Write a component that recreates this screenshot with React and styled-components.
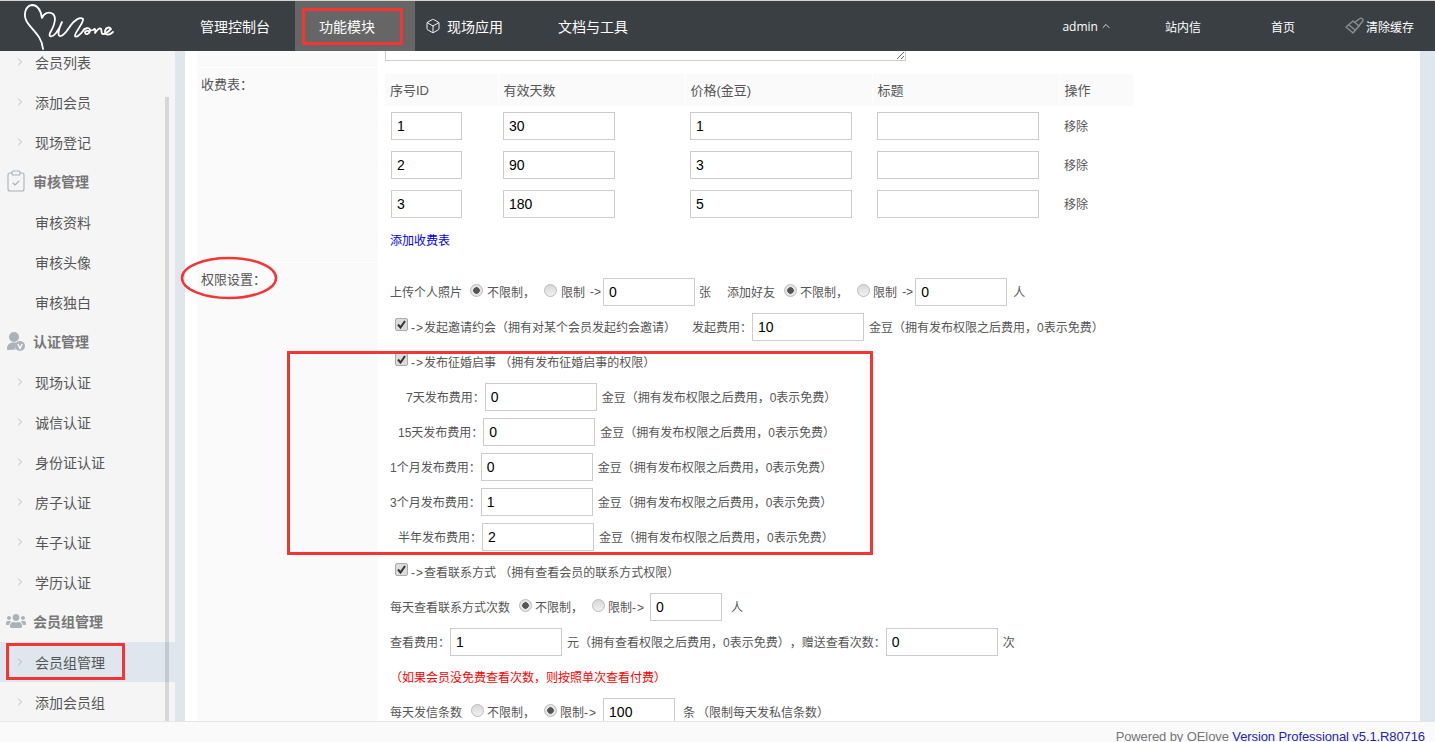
import React from "react";
import styled, { createGlobalStyle } from "styled-components";
import { Box, ChevronRight, ClipboardCheck, ChevronUp } from "lucide-react";
import { FaUsers } from "react-icons/fa";

const GlobalStyle = createGlobalStyle`
  html, body {
    margin: 0;
    padding: 0;
    height: 100%;
    overflow: hidden;
  }
  body {
    font-family: "Liberation Sans", "Noto Sans CJK SC", sans-serif;
    font-size: 12px;
    color: #555;
    text-spacing-trim: space-all;
  }
  * {
    box-sizing: border-box;
  }
`;

const Page = styled.div`
  position: relative;
  width: 1435px;
  height: 742px;
  display: flex;
  flex-direction: column;
  overflow: hidden;
  background: #fff;
`;

const Header = styled.header`
  flex: none;
  height: 51px;
  display: flex;
  align-items: stretch;
  background: #3a3f44;
  border-top: 1px solid #d4d4d4;
  color: #fff;
  font-size: 14px;
`;

const LogoWrap = styled.div`
  flex: none;
  width: 175px;
  padding-left: 20px;
  svg {
    display: block;
    margin-top: -1px;
  }
`;

const NavItem = styled.a`
  flex: none;
  display: flex;
  align-items: center;
  gap: ${(p) => p.$gap || 0}px;
  padding: 0 ${(p) => p.$pr}px 0 ${(p) => p.$pl}px;
  background: ${(p) => (p.$active ? "#666" : "transparent")};
  color: #fff;
`;

const NavRight = styled.div`
  margin-left: auto;
  display: flex;
  align-items: stretch;
  font-size: 12px;
`;

const AdminName = styled.span`
  font-family: "Open Sans", sans-serif;
  font-size: 12px;
  font-weight: 400;
`;

const Body = styled.div`
  flex: 1;
  min-height: 0;
  display: flex;
  background: #dfe6ee;
`;

const Sidebar = styled.aside`
  position: relative;
  flex: none;
  width: 175px;
  background: #f5f5f5;
  overflow: hidden;
`;

const SideList = styled.div`
  margin-top: -9px;
`;

const SideHead = styled.div`
  height: 40px;
  display: flex;
  align-items: center;
  padding: 0 0 2px 8px;
  gap: 9px;
  font-size: 14px;
  font-weight: 700;
  color: #777;
`;

const IconSlot = styled.span`
  flex: none;
  width: 16px;
  display: flex;
  justify-content: center;
  color: #aab2ba;
  svg {
    flex: none;
  }
`;

const SideItem = styled.div`
  height: 40px;
  display: flex;
  align-items: center;
  padding-left: ${(p) => (p.$plain ? 35 : 14)}px;
  gap: 9px;
  font-size: 14px;
  color: #555;
  background: ${(p) => (p.$active ? "#dfe6ee" : "transparent")};
  svg {
    flex: none;
    color: #999;
  }
`;

const ScrollThumb = styled.div`
  position: absolute;
  top: 46px;
  bottom: 0;
  left: 165px;
  width: 4px;
  background: rgba(0, 0, 0, 0.12);
`;

const Main = styled.main`
  flex: 1;
  min-width: 0;
  margin: 0 15px 0 10px;
  padding-left: 12px;
  background: #fff;
  overflow: hidden;
`;

const FormRow = styled.section`
  display: grid;
  grid-template-columns: 181px 1fr;
  height: ${(p) => p.$h}px;
  margin-bottom: 1px;
  overflow: hidden;
`;

const Label = styled.div`
  background: #fafafa;
  padding: 7px 0 0 4px;
  font-size: 13px;
  line-height: 20px;
  color: #555;
`;

const Content = styled.div`
  padding-left: 7px;
  min-width: 0;
`;

const Notes = styled.textarea`
  display: block;
  width: 521px;
  height: 70px;
  margin-top: -60px;
  border: 1px solid #ccc;
  background: #fff;
`;

const FeeTable = styled.table`
  width: 748px;
  margin-top: 6px;
  border-collapse: collapse;
  table-layout: fixed;
  th {
    height: 32px;
    padding: 0 5px 2px;
    background: #fafafa;
    border-right: 1px solid #fff;
    font-size: 13px;
    font-weight: 400;
    text-align: left;
    color: #555;
  }
  th:last-child {
    border-right: 0;
  }
  td {
    height: 39px;
    padding: 0 5px;
    vertical-align: middle;
    font-size: 12px;
    color: #555;
  }
`;

const Field = styled.input`
  display: block;
  flex: none;
  width: ${(p) => p.$w}px;
  height: 28px;
  margin-left: ${(p) => p.$ml || 0}px;
  padding: 0 5px;
  border: 1px solid #ccc;
  background: #fff;
  font-family: "Liberation Sans", sans-serif;
  font-size: 14px;
  color: #000;
  outline: none;
`;

const AddLink = styled.a`
  display: block;
  height: 36px;
  padding-left: 5px;
  line-height: 36px;
  font-size: 12px;
  color: #00e;
`;

const PermList = styled.div`
  padding: 11px 0 0 5px;
`;

const Line = styled.div`
  height: 35px;
  display: flex;
  align-items: center;
  white-space: nowrap;
  color: ${(p) => (p.$red ? "#f00" : "#555")};
`;

const Txt = styled.span`
  flex: none;
  margin-left: ${(p) => p.$ml || 0}px;
  font-size: 12px;
`;

const Arrow = styled.span`
  letter-spacing: 1px;
`;

const Radio = styled.input.attrs({ type: "radio", readOnly: true })`
  flex: none;
  appearance: none;
  width: 13px;
  height: 13px;
  margin: -2px 0 0 ${(p) => p.$ml || 0}px;
  border: 1px solid #bbb;
  border-radius: 50%;
  background: ${(p) =>
    p.checked
      ? "radial-gradient(circle, #555 0 3px, #e4e4e4 3.5px)"
      : "linear-gradient(#d8d8d8, #f0f0f0)"};
`;

const Check = styled.span`
  flex: none;
  display: flex;
  align-items: center;
  justify-content: center;
  width: 13px;
  height: 13px;
  margin: -4px 0 0 5px;
  border: 1px solid #aaa;
  border-radius: 2px;
  background: #dcdcdc;
  color: #333;
  svg {
    display: block;
  }
`;

const Footer = styled.footer`
  flex: none;
  height: 21px;
  padding: 6px 10px 0 0;
  border-top: 1px solid #e5e5e5;
  background: #fafafa;
  text-align: right;
  font-size: 13px;
  line-height: 18px;
  letter-spacing: -0.1px;
  color: #777;
  white-space: nowrap;
  a {
    color: #22b;
  }
`;

const RedBox = styled.div`
  position: absolute;
  left: ${(p) => p.$x}px;
  top: ${(p) => p.$y}px;
  width: ${(p) => p.$w}px;
  height: ${(p) => p.$h}px;
  border: 3px solid #f43535;
  pointer-events: none;
`;

const RedEllipse = styled.svg`
  position: absolute;
  left: 179px;
  top: 256px;
  pointer-events: none;
`;

const Logo = () => (
  <svg width="100" height="52" viewBox="0 0 100 52" fill="none" stroke="#fff" strokeWidth="1.8" strokeLinecap="round" strokeLinejoin="round">
    <path d="M23 49C22 36 12 30 7 22C3 15 5 6 12 5C18 5 21 12 22 18C24 13 29 11 33 14C37 18 34 26 30 33C28 38 33 37 36 33C39 29 41 25 42 22C38 30 37 37 41 36C45 35 48 29 51 25C54 21 60 16 63 19C64 23 54 33 55 36C56 38 60 35 63 31C64 28 70 27 70 30C70 34 65 36 65 32C66 30 70 31 73 30C75 28 76 29 75 33C77 30 80 27 81 29C82 31 81 34 83 34C86 34 89 31 91 29C89 26 85 28 85 32C85 36 90 35 93 32" />
  </svg>
);

const BrushIcon = () => (
  <svg width="20" height="20" viewBox="0 0 20 20" fill="none" stroke="#8b8f93" strokeWidth="1.4" strokeLinejoin="round">
    <path d="M1 11L8 5L14 10L8 17C6 15 3 13 1 11Z" />
    <path d="M10 6L15 2.500C16 1.600 18 2.600 18 4C18.300 5 17.500 5.500 17 6L13 11" />
    <path d="M4 9L10 14" />
  </svg>
);

const VerifyIcon = () => (
  <svg width="18" height="20" viewBox="0 0 18 20" fill="#aab2ba">
    <circle cx="7" cy="6" r="5" />
    <path d="M0 18C0 13 3 11.500 7 11.500C8 11.500 9 11.600 9.500 12C7.500 14 7.500 17 9 18.500L1 19C0.400 19 0 18.600 0 18Z" />
    <circle cx="13" cy="15" r="5" />
    <path d="M10.800 13L13 17.500L15.200 13" fill="none" stroke="#fff" strokeWidth="1.4" />
  </svg>
);

const CheckMark = () => (
  <svg width="9" height="9" viewBox="0 0 9 9" fill="none" stroke="currentColor" strokeWidth="2">
    <path d="M1 4.500L3.500 7.500L8 1" />
  </svg>
);

const feeRows = [
  ["1", "30", "1"],
  ["2", "90", "3"],
  ["3", "180", "5"],
];

const sideEntries = [
  { text: "会员列表" },
  { text: "添加会员" },
  { text: "现场登记" },
  { text: "审核管理", head: <ClipboardCheck size={24} strokeWidth={1.1} /> },
  { text: "审核资料", plain: true },
  { text: "审核头像", plain: true },
  { text: "审核独白", plain: true },
  { text: "认证管理", head: <VerifyIcon /> },
  { text: "现场认证" },
  { text: "诚信认证" },
  { text: "身份证认证" },
  { text: "房子认证" },
  { text: "车子认证" },
  { text: "学历认证" },
  { text: "会员组管理", head: <FaUsers size={20} /> },
  { text: "会员组管理", active: true },
  { text: "添加会员组" },
];

const costNote = "金豆（拥有发布权限之后费用，0表示免费）";

const priceLines = [
  { label: "7天发布费用：", ml: 16, value: "0" },
  { label: "15天发布费用：", ml: 8, value: "0" },
  { label: "1个月发布费用：", ml: 0, value: "0" },
  { label: "3个月发布费用：", ml: 0, value: "1" },
  { label: "半年发布费用：", ml: 8, value: "2" },
];

const App = () => (
  <Page>
    <GlobalStyle />
    <Header>
      <LogoWrap>
        <Logo />
      </LogoWrap>
      <NavItem $pl={25} $pr={25}>管理控制台</NavItem>
      <NavItem $pl={24} $pr={40} $active>功能模块</NavItem>
      <NavItem $pl={10} $pr={28} $gap={6}>
        <Box size={16} strokeWidth={1.4} />
        现场应用
      </NavItem>
      <NavItem $pl={27} $pr={0}>文档与工具</NavItem>
      <NavRight>
        <NavItem $pl={0} $pr={53} $gap={2}>
          <AdminName>admin</AdminName>
          <ChevronUp size={12} strokeWidth={1.6} />
        </NavItem>
        <NavItem $pl={0} $pr={70}>站内信</NavItem>
        <NavItem $pl={0} $pr={50}>首页</NavItem>
        <NavItem $pl={0} $pr={21} $gap={1}>
          <BrushIcon />
          清除缓存
        </NavItem>
      </NavRight>
    </Header>
    <Body>
      <Sidebar>
        <SideList>
          {sideEntries.map((entry, i) =>
            entry.head ? (
              <SideHead key={i}>
                <IconSlot>{entry.head}</IconSlot>
                {entry.text}
              </SideHead>
            ) : (
              <SideItem key={i} $plain={entry.plain} $active={entry.active}>
                {!entry.plain && <ChevronRight size={12} strokeWidth={1.3} />}
                {entry.text}
              </SideItem>
            )
          )}
        </SideList>
        <ScrollThumb />
      </Sidebar>
      <Main>
        <FormRow $h={16}>
          <Label />
          <Content>
            <Notes readOnly />
          </Content>
        </FormRow>
        <FormRow $h={194}>
          <Label>收费表：</Label>
          <Content>
            <FeeTable>
              <colgroup>
                <col width="113" />
                <col width="187" />
                <col width="187" />
                <col width="187" />
                <col width="74" />
              </colgroup>
              <thead>
                <tr>
                  <th>序号ID</th>
                  <th>有效天数</th>
                  <th>价格(金豆)</th>
                  <th>标题</th>
                  <th>操作</th>
                </tr>
              </thead>
              <tbody>
                {feeRows.map((row) => (
                  <tr key={row[0]}>
                    <td><Field $w={71} $ml={1} defaultValue={row[0]} /></td>
                    <td><Field $w={112} defaultValue={row[1]} /></td>
                    <td><Field $w={162} defaultValue={row[2]} /></td>
                    <td><Field $w={162} /></td>
                    <td>移除</td>
                  </tr>
                ))}
              </tbody>
            </FeeTable>
            <AddLink>添加收费表</AddLink>
          </Content>
        </FormRow>
        <FormRow $h={470}>
          <Label>权限设置：</Label>
          <Content>
            <PermList>
              <Line>
                <Txt>上传个人照片</Txt>
                <Radio $ml={8} checked />
                <Txt $ml={4}>不限制，</Txt>
                <Radio $ml={9} checked={false} />
                <Txt $ml={4}>限制</Txt>
                <Txt $ml={5}>-&gt;</Txt>
                <Field $w={92} $ml={2} defaultValue="0" />
                <Txt $ml={4}>张</Txt>
                <Txt $ml={16}>添加好友</Txt>
                <Radio $ml={9} checked />
                <Txt $ml={3}>不限制，</Txt>
                <Radio $ml={9} checked={false} />
                <Txt $ml={3}>限制</Txt>
                <Txt $ml={5}>-&gt;</Txt>
                <Field $w={92} $ml={2} defaultValue="0" />
                <Txt $ml={6}>人</Txt>
              </Line>
              <Line>
                <Check><CheckMark /></Check>
                <Txt $ml={3}><Arrow>-&gt;</Arrow>发起邀请约会（拥有对某个会员发起约会邀请）</Txt>
                <Txt $ml={16}>发起费用：</Txt>
                <Field $w={112} defaultValue="10" />
                <Txt $ml={5}>{costNote}</Txt>
              </Line>
              <Line>
                <Check><CheckMark /></Check>
                <Txt $ml={3}><Arrow>-&gt;</Arrow>发布征婚启事 （拥有发布征婚启事的权限）</Txt>
              </Line>
              {priceLines.map((line) => (
                <Line key={line.label}>
                  <Txt $ml={line.ml}>{line.label}</Txt>
                  <Field $w={112} defaultValue={line.value} />
                  <Txt $ml={5}>{costNote}</Txt>
                </Line>
              ))}
              <Line>
                <Check><CheckMark /></Check>
                <Txt $ml={3}><Arrow>-&gt;</Arrow>查看联系方式 （拥有查看会员的联系方式权限）</Txt>
              </Line>
              <Line>
                <Txt>每天查看联系方式次数</Txt>
                <Radio $ml={9} checked />
                <Txt $ml={3}>不限制，</Txt>
                <Radio $ml={9} checked={false} />
                <Txt $ml={3}>限制<Arrow>-&gt;</Arrow></Txt>
                <Field $w={72} $ml={5} defaultValue="0" />
                <Txt $ml={9}>人</Txt>
              </Line>
              <Line>
                <Txt>查看费用：</Txt>
                <Field $w={112} defaultValue="1" />
                <Txt $ml={5}>元（拥有查看权限之后费用，0表示免费），赠送查看次数：</Txt>
                <Field $w={112} defaultValue="0" />
                <Txt $ml={5}>次</Txt>
              </Line>
              <Line $red>
                <Txt>（如果会员没免费查看次数，则按照单次查看付费）</Txt>
              </Line>
              <Line>
                <Txt>每天发信条数</Txt>
                <Radio $ml={9} checked={false} />
                <Txt $ml={3}>不限制，</Txt>
                <Radio $ml={9} checked />
                <Txt $ml={3}>限制<Arrow>-&gt;</Arrow></Txt>
                <Field $w={72} $ml={6} defaultValue="100" />
                <Txt $ml={8}>条</Txt>
                <Txt $ml={2}>（限制每天发私信条数）</Txt>
              </Line>
            </PermList>
          </Content>
        </FormRow>
      </Main>
    </Body>
    <Footer>
      Powered by OElove <a>Version Professional v5.1.R80716</a>
    </Footer>
    <RedBox $x={302} $y={8} $w={101} $h={37} />
    <RedBox $x={6} $y={643} $w={119} $h={37} />
    <RedBox $x={287} $y={351} $w={586} $h={204} />
    <RedEllipse width="100" height="46" viewBox="0 0 100 46" fill="none">
      <ellipse cx="50" cy="22" rx="47" ry="20" stroke="#f43535" strokeWidth="2.5" />
    </RedEllipse>
  </Page>
);

export default App;
